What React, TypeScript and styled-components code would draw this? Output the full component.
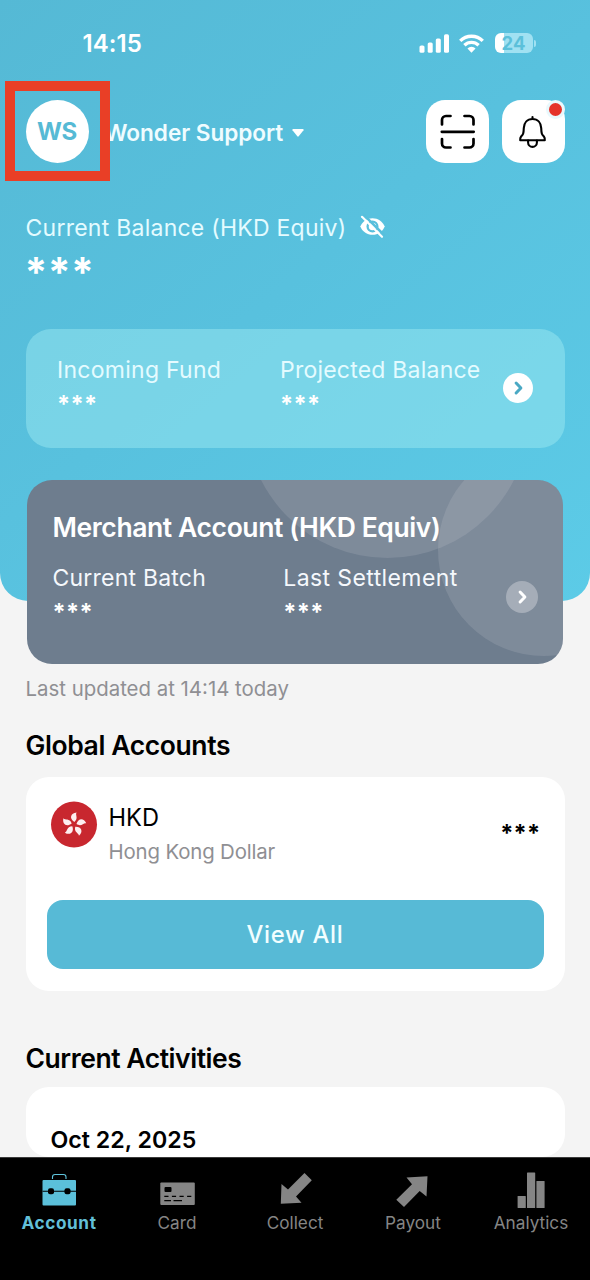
import React from "react";
import styled, { createGlobalStyle } from "styled-components";

const GlobalStyle = createGlobalStyle`
  *, *::before, *::after { box-sizing: border-box; }
  body { margin: 0; background: #f4f4f4; font-family: Inter, "Liberation Sans", sans-serif; }
  h2, p { margin: 0; }
  svg { display: block; flex: none; overflow: visible; }
  button { font: inherit; border: 0; padding: 0; }
`;

const Screen = styled.div`
  width: 590px;
  height: 1280px;
  display: flex;
  flex-direction: column;
  overflow: hidden;
  background: #f4f4f4;
`;

const Scroll = styled.main`
  height: 1157px;
  flex: none;
  overflow: hidden;
`;

const Hero = styled.header`
  height: 601px;
  padding: 0 25.5px;
  border-radius: 0 0 28px 28px;
  background: linear-gradient(140deg, #55b9d5 0%, #58c1de 48%, #5ccbe7 100%);
`;

const Label = styled.span<{ $size: number; $weight?: number; $track?: number; $color?: string; $line?: number }>`
  display: block;
  width: max-content;
  white-space: nowrap;
  font-size: ${(p) => p.$size}px;
  line-height: ${(p) => p.$line ?? 30}px;
  font-weight: ${(p) => p.$weight ?? 400};
  letter-spacing: ${(p) => p.$track ?? 0}px;
  color: ${(p) => p.$color ?? "#000"};
`;

const StatusBar = styled.div`
  height: 100px;
  padding: 28px 32px 0 57px;
  display: flex;
  justify-content: space-between;
`;

const StatusIcons = styled.div`
  display: flex;
  height: 30px;
  align-items: center;
  gap: 10px;
`;

const HeaderRow = styled.div`
  height: 63px;
  display: flex;
  align-items: center;
`;

const Avatar = styled.div`
  position: relative;
  z-index: 1;
  width: 63px;
  height: 63px;
  border-radius: 50%;
  background: #fff;
  display: grid;
  place-items: center;
`;

const HighlightBox = styled.div`
  position: absolute;
  left: -20.5px;
  top: -19px;
  width: 105px;
  height: 100px;
  border: 10px solid #e93f26;
`;

const UserMenu = styled.div`
  display: flex;
  align-items: center;
  gap: 9px;
  margin: 2px 0 0 16px;
  flex: 1;
`;

const Tools = styled.div`
  display: flex;
  gap: 12.5px;
`;

const ToolButton = styled.button`
  position: relative;
  width: 63px;
  height: 63px;
  border-radius: 19px;
  background: #fff;
  display: grid;
  place-items: center;
`;

const Dot = styled.span`
  position: absolute;
  right: 0;
  top: 0;
  width: 19px;
  height: 19px;
  border: 3px solid #e9f8fc;
  border-radius: 50%;
  background: #e5332a;
`;

const BalanceLine = styled.div`
  display: flex;
  align-items: center;
  gap: 14px;
  margin-top: 50px;
  height: 30px;
`;

const Mask = styled.div<{ $color?: string }>`
  height: 12px;
  font-size: 23.5px;
  font-weight: 700;
  line-height: 15px;
  letter-spacing: 0.3px;
  color: ${(p) => p.$color ?? "#fff"};
`;

const BalanceMask = styled(Mask)`
  height: 20px;
  margin: 13px 0 0 -1px;
  font-size: 41px;
  line-height: 32px;
`;

const FundCard = styled.section`
  height: 119px;
  margin-top: 53px;
  padding: 26px 31.5px 0 31.5px;
  border-radius: 25px;
  background: rgba(151, 230, 240, 0.52);
  display: flex;
`;

const Column = styled.div<{ $width: number }>`
  width: ${(p) => p.$width}px;
  display: flex;
  flex-direction: column;
  gap: 11px;
`;

const RoundArrow = styled.span<{ $size: number; $bg: string; $top: number }>`
  width: ${(p) => p.$size}px;
  height: ${(p) => p.$size}px;
  margin-top: ${(p) => p.$top}px;
  flex: none;
  border-radius: 50%;
  background: ${(p) => p.$bg};
  display: grid;
  place-items: center;
`;

const MerchantCard = styled.section`
  position: relative;
  height: 184px;
  margin: -121px 27px 0;
  padding: 32px 25px 0 25.5px;
  border-radius: 25px;
  overflow: hidden;
  background: #6e7d8e;
`;

const Bubble = styled.span<{ $x: number; $y: number; $d: number }>`
  position: absolute;
  left: ${(p) => p.$x}px;
  top: ${(p) => p.$y}px;
  width: ${(p) => p.$d}px;
  height: ${(p) => p.$d}px;
  border-radius: 50%;
  background: rgba(216, 216, 226, 0.155);
`;

const MerchantBody = styled.div`
  position: relative;
`;

const MerchantRow = styled.div`
  display: flex;
  margin-top: 21px;
`;

const Content = styled.div`
  padding: 10px 25.5px 0;
`;

const Panel = styled.section<{ $height: number }>`
  height: ${(p) => p.$height}px;
  padding: 24px 21px 0 21px;
  border-radius: 23px;
  background: #fff;
`;

const AccountRow = styled.div`
  display: flex;
  height: 99px;
  padding: 0 3px 0 4px;
`;

const AccountNames = styled.div`
  margin: 2px 0 0 12px;
  flex: 1;
`;

const ViewAll = styled.button`
  width: 497px;
  height: 69px;
  border-radius: 16px;
  background: #57bad6;
  display: grid;
  place-items: center;
`;

const DateHeading = styled.div`
  padding: 13px 0 0 4px;
`;

const TabBar = styled.nav`
  flex: 1;
  background: #000;
  border-top: 1px solid #3b3b3b;
  display: grid;
  grid-template-columns: repeat(5, 118px);
`;

const Tab = styled.div`
  display: flex;
  flex-direction: column;
  align-items: center;
  padding-top: 14px;
`;

const Chevron = ({ color }: { color: string }) => (
  <svg width="8" height="14" viewBox="0 0 8 14" fill="none" stroke={color} strokeWidth="3" strokeLinecap="round" strokeLinejoin="round">
    <path d="M2.100 2 6.900 7 2.100 12" />
  </svg>
);

const Signal = () => (
  <svg width="30" height="19" viewBox="0 0 30 19" fill="#fff">
    <rect x="0.500" y="11.5" width="5" height="7.3" rx="1.6" />
    <rect x="8.700" y="8.5" width="5" height="10.3" rx="1.6" />
    <rect x="16.800" y="4.5" width="5" height="14.3" rx="1.6" />
    <rect x="25" y="0.3" width="5" height="18.5" rx="1.6" />
  </svg>
);

const Wifi = () => (
  <svg width="25" height="19" viewBox="0 0 26 19" fill="none" stroke="#fff" strokeWidth="3.5">
    <path d="M1.3 6.8A16.5 16.5 0 0 1 24.7 6.8" />
    <path d="M5.6 11.4A10.6 10.6 0 0 1 20.4 11.4" />
    <path d="M13 19 8.8 14.8A5.8 5.8 0 0 1 17.2 14.8Z" fill="#fff" stroke="none" />
  </svg>
);

const BatteryBody = styled.div`
  position: relative;
  width: 38px;
  height: 20px;
  margin-left: 1px;
  border-radius: 6px;
  background: linear-gradient(90deg, #fff 0 9px, #a0e1f2 9px);
  display: grid;
  place-items: center;
  &::after {
    content: "";
    position: absolute;
    right: -3.5px;
    top: 6.5px;
    width: 2.5px;
    height: 7px;
    border-radius: 0 3px 3px 0;
    background: #a0e1f2;
  }
`;

const EyeOff = () => (
  <svg width="26" height="22" viewBox="0.500 1 26 22" fill="none" strokeLinecap="round">
    <path d="M.8 10.500C2.800 5.500 7.500 2.200 13 2.200S23.200 5.500 25.200 10.500C23.200 15.500 18.500 18.800 13 18.800S2.800 15.500.8 10.500Z" fill="#fff" />
    <circle cx="13" cy="10.500" r="4.900" stroke="#58bfdc" strokeWidth="2.300" />
    <path d="M4.500-.8 24.500 19" stroke="#58bfdc" strokeWidth="2.600" />
    <path d="M2.500.8 22.500 20.800" stroke="#fff" strokeWidth="2.200" />
  </svg>
);

const Scan = () => (
  <svg width="34" height="34" viewBox="0 0 34 34" fill="none" stroke="#000" strokeWidth="2.7" strokeLinecap="round">
    <path d="M1 9.500V5A4 4 0 0 1 5 1H9.500M23.500 1H28.500A4 4 0 0 1 32.500 5V9.500M32.500 24V28.500A4 4 0 0 1 28.500 32.500H23.500M9.500 32.500H5A4 4 0 0 1 1 28.500V24M.800 16.800H32.700" />
  </svg>
);

const Bell = () => (
  <svg width="28" height="32" viewBox="0.500 0 28 32" fill="none" stroke="#000" strokeWidth="2.1" strokeLinejoin="round" strokeLinecap="round">
    <path d="M14 1V3M14 3C8.500 3 5.500 7 5.300 12 5.100 18 4.600 18.500 2.600 20.500 1.600 21.600 1.600 23 1.700 24.200H26.300C26.400 23 26.400 21.600 25.400 20.500 23.400 18.500 22.900 18 22.700 12 22.500 7 19.500 3 14 3Z" />
    <path d="M9.600 24.500V26.500A4.400 4.400 0 0 0 18.400 26.500V24.500" />
  </svg>
);

const HongKong = () => (
  <svg width="46" height="46" viewBox="-23 -23.500 46 46">
    <circle r="23" fill="#c8272f" />
    <g fill="#fdeef0">
      {[0, 72, 144, 216, 288].map((a) => (
        <path key={a} transform={`rotate(${a})`} d="M.3-2.500C-5-6-3.500-11.500 2.600-12 .8-9.500 5-6.500.3-2.500Z" />
      ))}
    </g>
  </svg>
);

const AccountIcon = () => (
  <svg width="36" height="36" viewBox="0 0 36 36">
    <path d="M11.500 7V5Q11.500 2.500 14 2.500H22.500Q25 2.500 25 5V7" fill="none" stroke="#5fc4dc" strokeWidth="1.100" />
    <rect x="1.500" y="8" width="33.500" height="25.500" rx="1" fill="#5bc0da" />
    <path d="M1.500 19.300H35" stroke="#000" strokeWidth="1.100" />
    <rect x="7" y="16.200" width="6" height="6" rx="2" />
    <rect x="23.500" y="16.200" width="6" height="6" rx="2" />
  </svg>
);

const CardIcon = () => (
  <svg width="36" height="36" viewBox="0 0 36 36">
    <rect x="1.300" y="10.500" width="34.500" height="22.500" rx="1" fill="#858585" />
    <rect x="5.500" y="15" width="7" height="5" rx="1" />
    <path d="M5.300 24.300H32.500" stroke="#000" strokeWidth="1.300" strokeDasharray="4.200 3.400" />
    <path d="M5.300 28.700H12M14.500 28.700H23" stroke="#000" strokeWidth="1.300" />
  </svg>
);

const CollectIcon = () => (
  <svg width="36" height="36" viewBox="0 0 36 36" fill="#858585">
    <path d="M27.500 1 34.800 8.200 19 24.500 24.500 30.800 3.800 31.800 4.500 12 11 17.500Z" />
  </svg>
);

const PayoutIcon = () => (
  <svg width="36" height="36" viewBox="0 0 36 36" fill="#858585">
    <path d="M9 35 1.300 27.700 17 12.300 11.500 5.500 32.500 4.300 31.500 24.500 24.700 19Z" />
  </svg>
);

const AnalyticsIcon = () => (
  <svg width="36" height="36" viewBox="0 0 36 36" fill="#858585">
    <rect x="4.600" y="24" width="8.200" height="12" rx=".6" />
    <rect x="14" y=".4" width="8.200" height="35.600" rx=".6" />
    <rect x="23.400" y="9" width="8.200" height="27" rx=".6" />
  </svg>
);

const tabs = [
  { name: "Account", icon: <AccountIcon />, active: true },
  { name: "Card", icon: <CardIcon /> },
  { name: "Collect", icon: <CollectIcon /> },
  { name: "Payout", icon: <PayoutIcon /> },
  { name: "Analytics", icon: <AnalyticsIcon /> },
];

const Spacer = styled.div<{ $h: number }>`
  height: ${(p) => p.$h}px;
`;

const AccountAmount = styled.div`
  margin-top: 24px;
`;

export default function App() {
  return (
    <Screen>
      <GlobalStyle />
      <Scroll>
        <Hero>
          <StatusBar>
            <Label $size={24} $weight={600} $track={0.1} $color="#fff" $line={32}>14:15</Label>
            <StatusIcons>
              <Signal />
              <Wifi />
              <BatteryBody>
                <Label $size={18.5} $weight={700} $line={20} $color="#5bc0da">24</Label>
              </BatteryBody>
            </StatusIcons>
          </StatusBar>
          <HeaderRow>
            <Avatar>
              <Label $size={24} $weight={700} $track={-0.3} $color="#56bad5">WS</Label>
              <HighlightBox />
            </Avatar>
            <UserMenu>
              <Label $size={22.6} $weight={600} $track={-0.05} $color="#effcff">Wonder Support</Label>
              <svg width="12" height="8" viewBox="0 0 12 8" fill="#fff"><path d="M1 0H11Q12 .2 11.500 1.200L6.700 7.300Q6 8 5.300 7.300L.5 1.200Q0 .2 1 0Z" /></svg>
            </UserMenu>
            <Tools>
              <ToolButton><Scan /></ToolButton>
              <ToolButton><Bell /><Dot /></ToolButton>
            </Tools>
          </HeaderRow>
          <BalanceLine>
            <Label $size={23} $track={0.25} $color="#e4fbff">Current Balance (HKD Equiv)</Label>
            <EyeOff />
          </BalanceLine>
          <BalanceMask>***</BalanceMask>
          <FundCard>
            <Column $width={223}>
              <Label $size={23} $track={0.27} $color="#e4fbff">Incoming Fund</Label>
              <Mask>***</Mask>
            </Column>
            <Column $width={223}>
              <Label $size={23} $track={0.22} $color="#e4fbff">Projected Balance</Label>
              <Mask>***</Mask>
            </Column>
            <RoundArrow $size={30} $bg="#fff" $top={18}><Chevron color="#4aa9c4" /></RoundArrow>
          </FundCard>
        </Hero>
        <MerchantCard>
          <Bubble $x={219} $y={-205} $d={283} />
          <Bubble $x={411} $y={-36} $d={212} />
          <MerchantBody>
            <Label $size={26.5} $weight={600} $track={-0.4} $color="#fff">Merchant Account (HKD Equiv)</Label>
            <MerchantRow>
              <Column $width={231}>
                <Label $size={23} $track={0.22} $color="#f5f8fc">Current Batch</Label>
                <Mask>***</Mask>
              </Column>
              <Column $width={223}>
                <Label $size={23} $track={0.4} $color="#f5f8fc">Last Settlement</Label>
                <Mask>***</Mask>
              </Column>
              <RoundArrow $size={32} $bg="#a5adb8" $top={18}><Chevron color="#fff" /></RoundArrow>
            </MerchantRow>
          </MerchantBody>
        </MerchantCard>
        <Content>
          <Label $size={20.4} $color="#8f8f93">Last updated at 14:14 today</Label>
          <Spacer $h={26} />
          <Label as="h2" $size={26.5} $weight={600} $track={-0.4}>Global Accounts</Label>
          <Spacer $h={17} />
          <Panel $height={214}>
            <AccountRow>
              <HongKong />
              <AccountNames>
                <Label $size={23.6}>HKD</Label>
                <Label $size={20.4} $track={-0.15} $color="#8f8f93" $line={38}>Hong Kong Dollar</Label>
              </AccountNames>
              <AccountAmount><Mask $color="#000">***</Mask></AccountAmount>
            </AccountRow>
            <ViewAll><Label $size={23.8} $weight={500} $track={0.7} $line={32} $color="#f2feff">View All</Label></ViewAll>
          </Panel>
          <Spacer $h={52} />
          <Label as="h2" $size={26.5} $weight={600} $track={-0.45}>Current Activities</Label>
          <Spacer $h={14} />
          <Panel $height={70}>
            <DateHeading>
              <Label $size={23.2} $weight={600} $line={32}>Oct 22, 2025</Label>
            </DateHeading>
          </Panel>
        </Content>
      </Scroll>
      <TabBar>
        {tabs.map((t) => (
          <Tab key={t.name}>
            {t.icon}
            <Label $size={17.2} $weight={t.active ? 700 : 400} $track={t.active ? 0.6 : 0} $line={30} $color={t.active ? "#62bfd8" : "#858585"}>{t.name}</Label>
          </Tab>
        ))}
      </TabBar>
    </Screen>
  );
}
